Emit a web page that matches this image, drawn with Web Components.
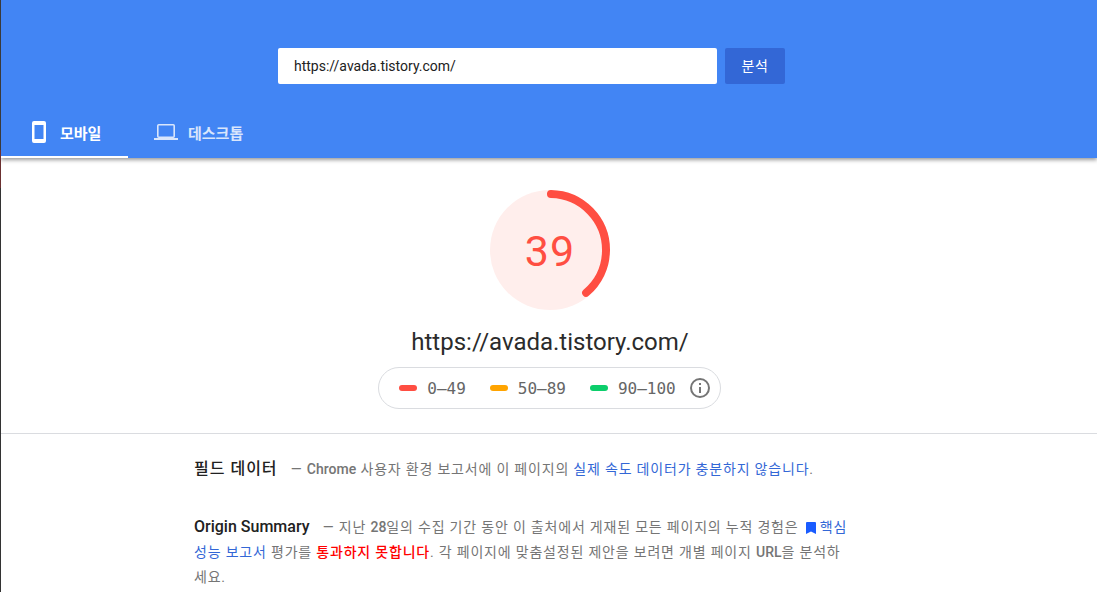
<!DOCTYPE html>
<html lang="ko">
<head>
<meta charset="utf-8">
<title>PageSpeed Insights</title>
<style>
  html, body { margin: 0; padding: 0; height: 100%; overflow: hidden; background: #fff; }
  body {
    font-family: Roboto, "Noto Sans CJK KR", sans-serif;
    border-left: 1px solid #3a3a3a;
    border-image: linear-gradient(#3a3a3a 150px, #6b3030 150px, #6b3030 188px, #333 188px) 1;
    box-sizing: border-box;
  }
</style>
</head>
<body>
<psi-header>
  <psi-tab slot="tabs" active label="모바일" icon="mobile"></psi-tab>
  <psi-tab slot="tabs" label="데스크톱" icon="desktop"></psi-tab>
</psi-header>
<psi-score url="https://avada.tistory.com/" score="39"></psi-score>
<psi-field></psi-field>
<psi-summary></psi-summary>

<script>
// Top bar with search form and device tabs
class PsiHeader extends HTMLElement {
  constructor() {
    super();
    this.attachShadow({ mode: 'open' });
    this.shadowRoot.innerHTML = `
      <style>
        :host {
          display: flex;
          flex-direction: column;
          height: 158px;
          background: #4285f4;
          box-shadow: 0 2px 4px rgba(0, 0, 0, 0.4);
          position: relative;
        }
        form {
          display: flex;
          justify-content: center;
          gap: 8px;
          padding: 48px 34px 0 0;
          margin: 0 0 0 -1px;
        }
        .url {
          width: 439px;
          height: 36px;
          box-sizing: border-box;
          padding: 0 16px;
          background: #fff;
          border-radius: 2px;
          color: #212121;
          font-size: 14px;
          line-height: 36px;
        }
        .go {
          width: 60px;
          height: 36px;
          background: #3367d6;
          border-radius: 2px;
          color: #fff;
          font-size: 14px;
          letter-spacing: 0.5px;
          line-height: 36px;
          text-align: center;
        }
        .tabs {
          display: flex;
          margin-top: auto;
        }
      </style>
      <form>
        <div class="url">https://avada.tistory.com/</div>
        <div class="go">분석</div>
      </form>
      <div class="tabs"><slot name="tabs"></slot></div>
    `;
  }
}

const TAB_ICONS = {
  mobile: '<svg width="14" height="22" viewBox="0 0 14 22"><path fill-rule="evenodd" d="M2 0h10a2 2 0 0 1 2 2v18a2 2 0 0 1-2 2H2a2 2 0 0 1-2-2V2a2 2 0 0 1 2-2zM2.5 4v14h9V4z" fill="currentColor"/></svg>',
  desktop: '<svg width="24" height="16" viewBox="0 0 24 16"><rect x="3.8" y="0.8" width="16.4" height="12.4" rx="1" fill="none" stroke="currentColor" stroke-width="1.6"/><rect x="0" y="14" width="24" height="2" fill="currentColor"/></svg>'
};

class PsiTab extends HTMLElement {
  constructor() {
    super();
    this.attachShadow({ mode: 'open' });
  }

  connectedCallback() {
    this.shadowRoot.innerHTML = `
      <style>
        :host {
          display: flex;
          align-items: center;
          box-sizing: border-box;
          height: 50px;
          color: #fff;
          font-size: 15px;
          font-weight: 700;
        }
        :host([active]) {
          width: 127px;
          padding-left: 31px;
          gap: 14px;
          border-bottom: 2px solid #fff;
        }
        :host(:not([active])) {
          padding: 0 26px;
          gap: 10px;
          opacity: 0.8;
          border-bottom: 2px solid transparent;
        }
        svg { display: block; }
      </style>
      ${TAB_ICONS[this.getAttribute('icon')]}
      <span>${this.getAttribute('label')}</span>
    `;
  }
}

// Round score gauge, url and legend
class PsiScore extends HTMLElement {
  constructor() {
    super();
    this.attachShadow({ mode: 'open' });
  }

  connectedCallback() {
    const score = Number(this.getAttribute('score'));
    const r = 56;
    const len = 2 * Math.PI * r;
    this.shadowRoot.innerHTML = `
      <style>
        :host {
          display: flex;
          flex-direction: column;
          align-items: center;
          height: 276px;
          box-sizing: border-box;
          padding: 32px 0 0 2px;
          border-bottom: 1px solid #dadce0;
        }
        .gauge {
          position: relative;
          width: 120px;
          height: 120px;
        }
        .gauge svg { display: block; transform: rotate(-89deg); }
        .num {
          position: absolute;
          inset: 0;
          text-align: center;
          line-height: 123px;
          font-size: 43px;
          letter-spacing: 1px;
          color: #ff4e42;
        }
        .url {
          margin-top: 16px;
          font-size: 24px;
          line-height: 32px;
          color: #2b2b2b;
        }
        .legend {
          display: flex;
          align-items: center;
          box-sizing: border-box;
          height: 42px;
          margin: 9px 0 0 -1px;
          padding: 0 10px 0 20px;
          border: 1px solid #dadce0;
          border-radius: 21px;
          font-family: "DejaVu Sans Mono", monospace;
          font-size: 16px;
          color: #666;
        }
        .range { display: flex; align-items: center; gap: 10px; margin-right: 24px; }
        .range:nth-of-type(3) { margin-right: 14px; }
        i { display: block; width: 18px; height: 6px; border-radius: 3px; }
        .legend svg { display: block; }
      </style>
      <div class="gauge">
        <svg width="120" height="120" viewBox="0 0 120 120">
          <circle cx="60" cy="60" r="60" fill="#ffeeec" transform="rotate(-1 60 60)"/>
          <circle cx="60" cy="60" r="${r}" fill="none" stroke="#ff4e42" stroke-width="8" stroke-linecap="round"
            stroke-dasharray="${len * (score - 0.5) / 100} ${len}"/>
        </svg>
        <div class="num">${score}</div>
      </div>
      <div class="url">${this.getAttribute('url')}</div>
      <div class="legend">
        <div class="range"><i style="background:#ff4e42"></i>0–49</div>
        <div class="range"><i style="background:#ffa400"></i>50–89</div>
        <div class="range"><i style="background:#0cce6b"></i>90–100</div>
        <svg width="20" height="20" viewBox="0 0 20 20">
          <circle cx="10" cy="10" r="9" fill="none" stroke="#757575" stroke-width="2"/>
          <rect x="9" y="9" width="2" height="6" fill="#757575"/>
          <rect x="9" y="5" width="2" height="2" fill="#757575"/>
        </svg>
      </div>
    `;
  }
}

// Shared text block styles, hangul runs wider in the reference so spacing is on the host
const TEXT_STYLE = `
  :host {
    display: block;
    width: 656px;
    margin-left: 193px;
    font-size: 14px;
    line-height: 25px;
    letter-spacing: 0.8px;
    color: #757575;
  }
  h2 {
    display: inline;
    margin: 0 9px 0 0;
    font-size: 16px;
    font-weight: 500;
    color: #212121;
  }
  a { color: #3367d6; }
  b { font-weight: 500; letter-spacing: 0; }
`;

class PsiField extends HTMLElement {
  constructor() {
    super();
    this.attachShadow({ mode: 'open' });
    this.shadowRoot.innerHTML = `
      <style>
        ${TEXT_STYLE}
        :host { padding-top: 22px; }
        h2 { letter-spacing: 1px; }
      </style>
      <h2>필드 데이터</h2>
      — <b>Chrome</b> 사용자 환경 보고서에 이 페이지의 <a>실제 속도 데이터가 충분하지 않습니다</a>.
    `;
  }
}

class PsiSummary extends HTMLElement {
  constructor() {
    super();
    this.attachShadow({ mode: 'open' });
    this.shadowRoot.innerHTML = `
      <style>
        ${TEXT_STYLE}
        :host { padding-top: 32px; }
        h2 { letter-spacing: 0; }
        .fail { color: #f00; font-weight: 500; }
        svg { vertical-align: -2px; margin: 0 4px 0 3px; }
      </style>
      <h2>Origin Summary</h2>
      — 지난 <b>28</b>일의 수집 기간 동안 이 출처에서 게재된 모든 페이지의 누적 경험은
      <svg width="10" height="12" viewBox="0 0 10 12"><path d="M1 0h8a1 1 0 0 1 1 1v11L5 9.5 0 12V1a1 1 0 0 1 1-1z" fill="#1a5cff"/></svg><a>핵심 성능 보고서</a> 평가를 <span class="fail">통과하지 못합니다</span>. 각 페이지에 맞춤설정된 제안을 보려면 개별 페이지 <b>URL</b>을 분석하세요.
    `;
  }
}

customElements.define('psi-header', PsiHeader);
customElements.define('psi-tab', PsiTab);
customElements.define('psi-score', PsiScore);
customElements.define('psi-field', PsiField);
customElements.define('psi-summary', PsiSummary);
</script>
</body>
</html>
